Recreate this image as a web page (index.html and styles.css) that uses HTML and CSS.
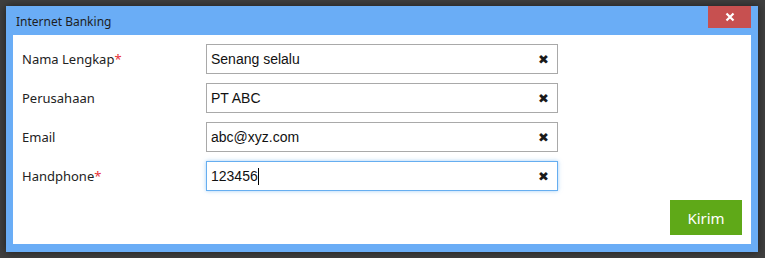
FILE: index.html
```html
<!DOCTYPE html>
<html lang="id">

<head>
    <meta charset="UTF-8">
    <title>Internet Banking</title>
    <link rel="stylesheet" href="styles.css">
</head>

<body>
    <div class="backdrop">
        <div class="dialog">
            <div class="dialog-title">
                <span>Internet Banking</span>
                <button class="close-btn" title="Tutup">
                    <svg width="10" height="10" viewBox="0 0 10 10"><path d="M1.5 1.5 L8.5 8.5 M8.5 1.5 L1.5 8.5" stroke="#fff" stroke-width="2.2"/></svg>
                </button>
            </div>
            <div class="dialog-body">
                <div class="row">
                    <label>Nama Lengkap<span class="req">*</span></label>
                    <div class="field"><span class="value">Senang selalu</span><span class="clear">&#10006;</span></div>
                </div>
                <div class="row">
                    <label>Perusahaan</label>
                    <div class="field"><span class="value">PT ABC</span><span class="clear">&#10006;</span></div>
                </div>
                <div class="row">
                    <label>Email</label>
                    <div class="field"><span class="value">abc@xyz.com</span><span class="clear">&#10006;</span></div>
                </div>
                <div class="row">
                    <label>Handphone<span class="req">*</span></label>
                    <div class="field focus"><span class="value">123456<span class="caret"></span></span><span class="clear">&#10006;</span></div>
                </div>
                <div class="actions">
                    <button class="submit">Kirim</button>
                </div>
            </div>
        </div>
    </div>
</body>

</html>
```

FILE: styles.css
```css
body {
    margin: 0;
    background-color: #3f3f3f;
    font-family: 'Noto Sans', 'Open Sans', Arial, sans-serif;
}

.backdrop {
    height: 258px;
    padding: 6px 0 0 6px;
    box-sizing: border-box;
}

.dialog {
    width: 752px;
    height: 246px;
    background-color: #6aadf6;
    box-shadow: 0 0 8px rgba(0, 0, 0, 0.5);
    display: flex;
    flex-direction: column;
    padding: 0 7px 8px 7px;
    box-sizing: border-box;
}

.dialog-title {
    height: 29px;
    display: flex;
    align-items: flex-start;
    justify-content: space-between;
    font-size: 12px;
    color: #1e1e1e;
}

.dialog-title span {
    padding: 7px 0 0 3px;
}

.close-btn {
    width: 43px;
    height: 22px;
    border: none;
    padding: 0;
    background-color: #c75050;
    display: flex;
    align-items: center;
    justify-content: center;
}

.dialog-body {
    flex: 1;
    background-color: #fff;
    padding: 9px;
    display: flex;
    flex-direction: column;
    gap: 9px;
}

.row {
    display: flex;
    align-items: center;
    height: 30px;
}

.row label {
    width: 184px;
    font-size: 13px;
    color: #222;
}

.req {
    color: #e8303a;
}

.field {
    width: 352px;
    height: 30px;
    box-sizing: border-box;
    border: 1px solid #a9a9a9;
    display: flex;
    align-items: center;
    justify-content: space-between;
    padding: 0 8px 0 4px;
    font-family: 'Liberation Sans', Arial, sans-serif;
    font-size: 14px;
    color: #111;
}

.field.focus {
    border-color: #66aef0;
    box-shadow: 0 0 4px rgba(102, 174, 240, 0.6);
}

.caret {
    display: inline-block;
    width: 1px;
    height: 17px;
    background-color: #000;
    vertical-align: -4px;
}

.clear {
    font-family: 'DejaVu Sans', sans-serif;
    font-size: 13px;
    font-weight: bold;
    color: #1a1a1a;
}

.actions {
    flex: 1;
    display: flex;
    justify-content: flex-end;
    align-items: flex-end;
}

.submit {
    width: 72px;
    height: 35px;
    border: none;
    background-color: #5fa918;
    color: #fff;
    font-family: 'Noto Sans', 'Open Sans', Arial, sans-serif;
    font-size: 15px;
}
```
